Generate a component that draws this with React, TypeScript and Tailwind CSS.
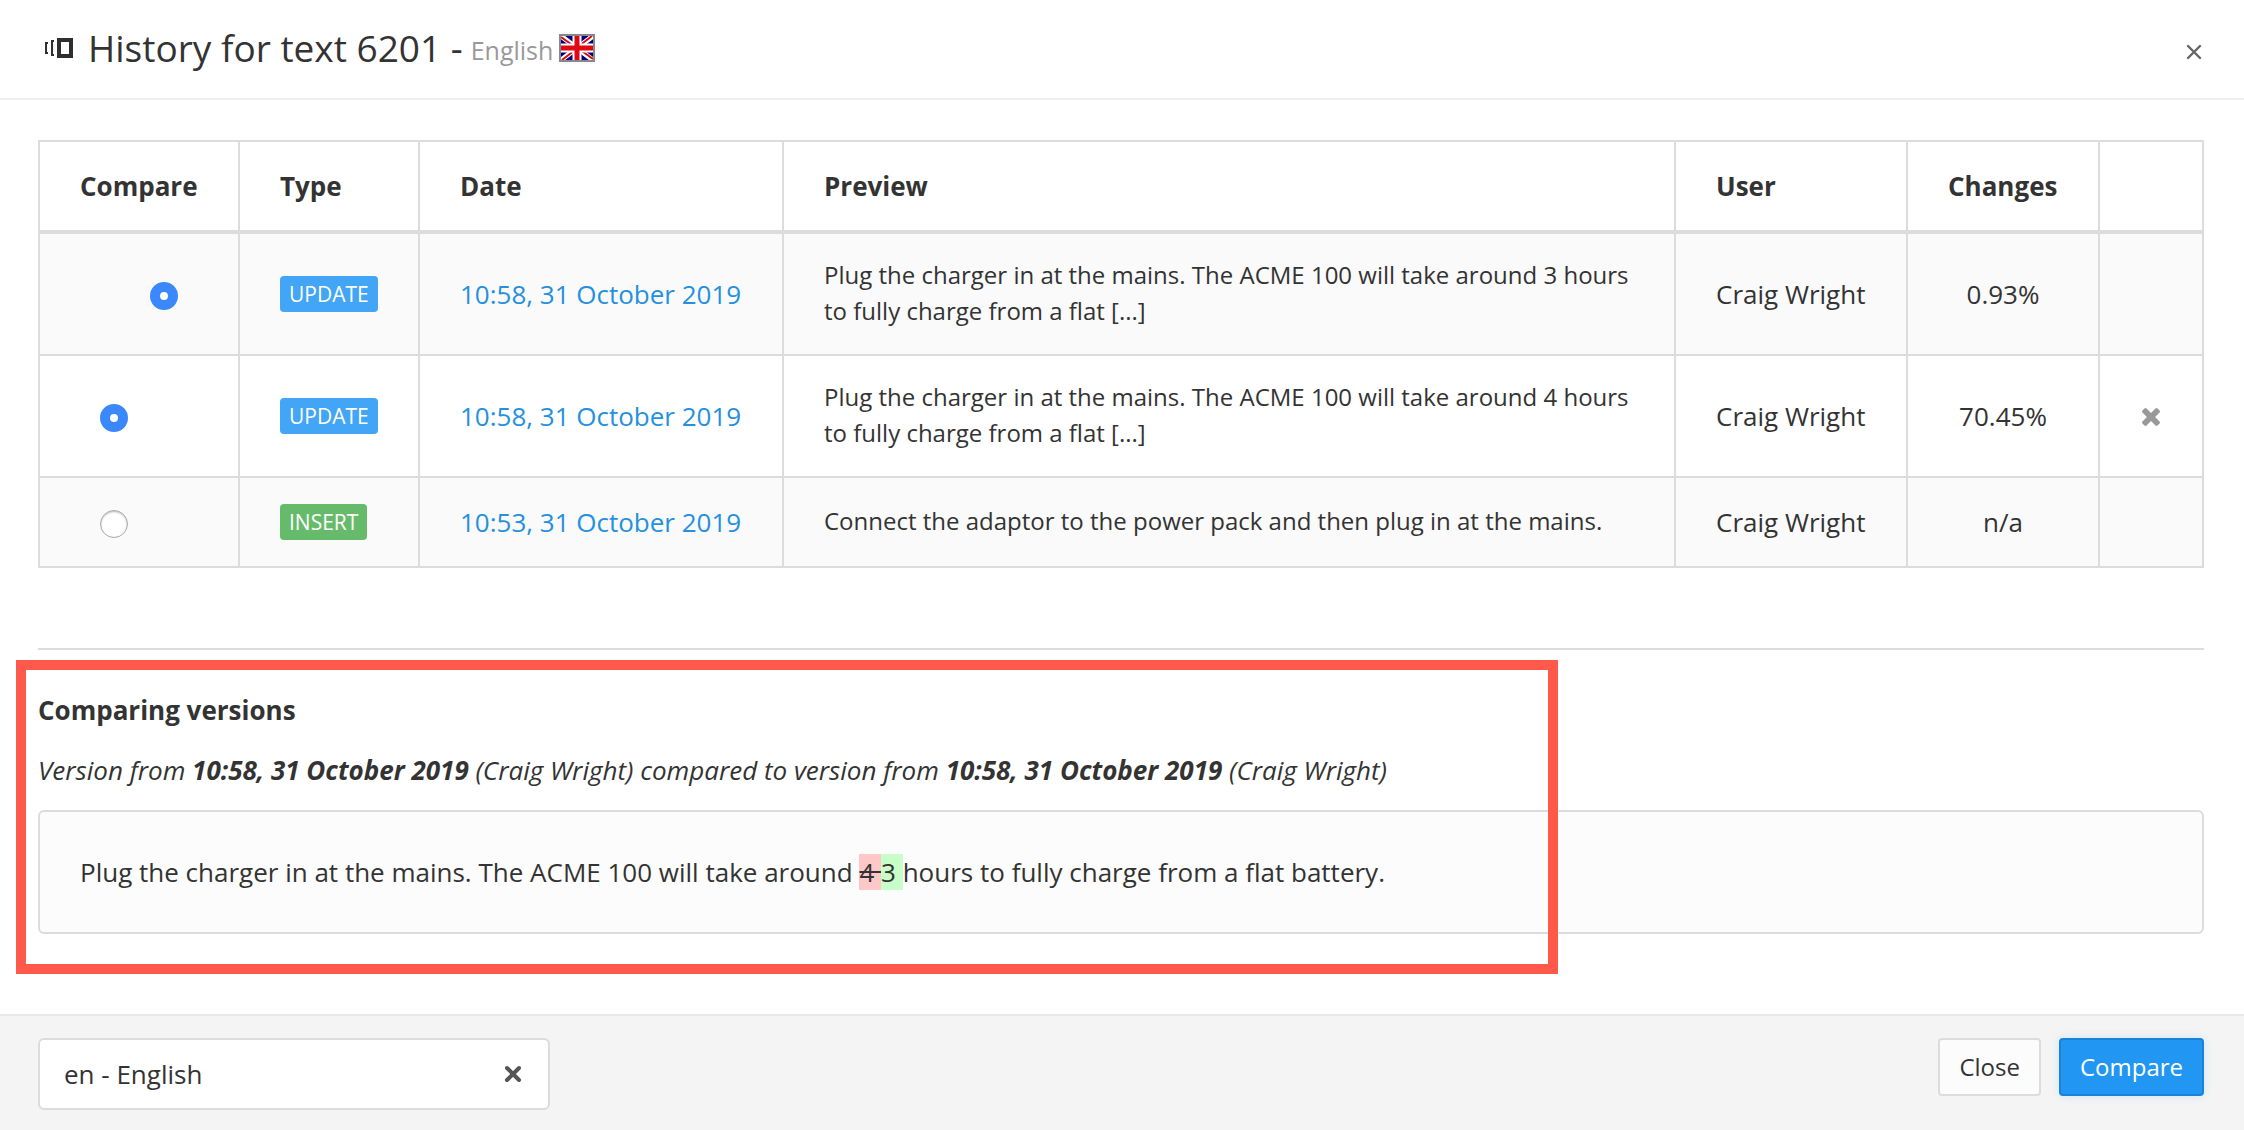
import { useState } from "react";

const rows = [
  { id: 3, side: "right", type: "UPDATE", date: "10:58, 31 October 2019", preview: "Plug the charger in at the mains. The ACME 100 will take around 3 hours to fully charge from a flat [...]", user: "Craig Wright", changes: "0.93%", removable: false },
  { id: 2, side: "left", type: "UPDATE", date: "10:58, 31 October 2019", preview: "Plug the charger in at the mains. The ACME 100 will take around 4 hours to fully charge from a flat [...]", user: "Craig Wright", changes: "70.45%", removable: true },
  { id: 1, side: "left", type: "INSERT", date: "10:53, 31 October 2019", preview: "Connect the adaptor to the power pack and then plug in at the mains.", user: "Craig Wright", changes: "n/a", removable: false },
];

const cell = "border-2 border-[#dcdcdc] px-10 py-6 text-left";

function HistoryIcon() {
  return (
    <svg width="30" height="20" viewBox="0 0 30 20" fill="none" stroke="#2f2f2f" aria-hidden="true">
      <path d="M4 5H2v10h2" strokeWidth="2" />
      <path d="M10 3H8v14h2" strokeWidth="2" />
      <path d="M15 2h12v16H15z" strokeWidth="4" />
    </svg>
  );
}

function Flag() {
  return (
    <svg width="36" height="28" viewBox="0 0 36 28" role="img" aria-label="United Kingdom">
      <path fill="#888" d="M0 0h36v28H0z" />
      <svg x="2" y="2" width="32" height="24" viewBox="0 0 32 24">
        <path fill="#00007a" d="M0 0h32v24H0z" />
        <path stroke="#fff" strokeWidth="5" d="M0 0l32 24M32 0L0 24" />
        <path stroke="#dd0a14" strokeWidth="2" d="M0 1l14 10M32 23L18 13M31 0L18 10M1 24l13-10" />
        <path stroke="#fff" strokeWidth="9" d="M16 0v24M0 12h32" />
        <path stroke="#dd0a14" strokeWidth="5" d="M16 0v24M0 12h32" />
      </svg>
    </svg>
  );
}

export default function App() {
  const [right, setRight] = useState(3);
  const [left, setLeft] = useState(2);
  const [lang, setLang] = useState("en - English");

  return (
    <div className="min-h-screen bg-white text-[26px] leading-10 text-[#333] font-['Open_Sans','Noto_Sans',sans-serif]">
      <header className="flex h-[100px] items-center justify-between border-b-2 border-[#eee] pr-10 pb-0.5 pl-11">
        <div className="flex items-center">
          <HistoryIcon />
          <h1 className="ml-3.5 flex items-end text-[37px]">
            History for text 6201 -
            <small className="ml-2 text-[25px] leading-9 text-[#999]">English</small>
          </h1>
          <span className="ml-1.5"><Flag /></span>
        </div>
        <button aria-label="Close dialog" className="mt-2 flex size-5 items-center justify-center">
          <svg width="16" height="16" viewBox="0 0 16 16" stroke="#666" strokeWidth="2.4" strokeLinecap="round">
            <path d="M2 2l12 12M14 2L2 14" />
          </svg>
        </button>
      </header>

      <main className="pt-10 pr-10 pb-20 pl-[38px]">
        <table className="w-full table-fixed border-collapse">
          <colgroup>
            <col className="w-[200px]" />
            <col className="w-[180px]" />
            <col className="w-[364px]" />
            <col />
            <col className="w-[232px]" />
            <col className="w-[192px]" />
            <col className="w-[104px]" />
          </colgroup>
          <thead>
            <tr>
              {["Compare", "Type", "Date", "Preview", "User", "Changes", ""].map((title) => (
                <th key={title} className="border-2 border-b-4 border-[#dcdcdc] px-10 py-6 text-left font-bold">{title}</th>
              ))}
            </tr>
          </thead>
          <tbody>
            {rows.map(({ id, side, type, date, preview, user, changes, removable }) => (
              <tr key={id} className="odd:bg-[#fafafa]">
                <td className={cell}>
                  <input
                    type="radio"
                    name={side}
                    aria-label={`Compare version ${id}`}
                    checked={side === "right" ? right === id : left === id}
                    onChange={() => (side === "right" ? setRight(id) : setLeft(id))}
                    className={`mt-1 block size-7 appearance-none rounded-full border border-[#aaa] bg-white shadow-[inset_0_1px_2px_#bbb] checked:border-10 checked:border-[#3b88fd] checked:shadow-none ${side === "right" ? "ml-[70px]" : "ml-5"}`}
                  />
                </td>
                <td className={cell}>
                  <span className={`block w-fit rounded-sm px-[9px] text-[21px] leading-9 text-white ${type === "INSERT" ? "bg-[#66bb6a]" : "bg-[#42a5f5]"}`}>{type}</span>
                </td>
                <td className={cell}>
                  <a href="#version" className="whitespace-nowrap text-[#2590e0]">{date}</a>
                </td>
                <td className="border-2 border-[#dcdcdc] px-10 pt-[23px] pb-[25px] text-[24px] leading-9">{preview}</td>
                <td className={`${cell} whitespace-nowrap`}>{user}</td>
                <td className="border-2 border-[#dcdcdc] py-6 text-center">{changes}</td>
                <td className="border-2 border-[#dcdcdc] pt-0.5">
                  {removable && (
                    <button aria-label="Delete version" className="mx-auto block">
                      <svg width="18" height="18" viewBox="110 366 1188 1188" fill="#999">
                        <path d="M1298 1322q0 40-28 68l-136 136q-28 28-68 28t-68-28l-294-294-294 294q-28 28-68 28t-68-28l-136-136q-28-28-28-68t28-68l294-294-294-294q-28-28-28-68t28-68l136-136q28-28 68-28t68 28l294 294 294-294q28-28 68-28t68 28l136 136q28 28 28 68t-28 68l-294 294 294 294q28 28 28 68z" />
                      </svg>
                    </button>
                  )}
                </td>
              </tr>
            ))}
          </tbody>
        </table>

        <section className="relative mt-20 border-t-2 border-[#dcdcdc] pt-10">
          <h2 className="font-bold">Comparing versions</h2>
          <p className="mt-5 italic">
            Version from <b>10:58, 31 October 2019</b> (Craig Wright) compared to version from <b>10:58, 31 October 2019</b> (Craig Wright)
          </p>
          <div id="version" className="mt-5 rounded-md border-2 border-[#dcdcdc] bg-[#fcfcfc] p-10">
            Plug the charger in at the mains. The ACME 100 will take around <del className="bg-[#ffc8c8]">4 </del><ins className="bg-[#c8ffc8] no-underline">3 </ins>hours to fully charge from a flat battery.
          </div>
          <div className="pointer-events-none absolute top-[10px] -bottom-10 -left-[22px] w-[1542px] border-10 border-[#ff594c]"></div>
        </section>
      </main>

      <footer className="flex items-start justify-between border-t-2 border-[#e8e8e8] bg-[#f4f4f4] pt-[22px] pr-10 pb-5 pl-[38px]">
        <div className="flex h-[72px] w-[512px] items-center rounded-md border-2 border-[#dcdcdc] bg-white pr-[26px] pl-6">
          <input aria-label="Language" value={lang} onChange={(e) => setLang(e.target.value)} className="min-w-0 grow outline-none" />
          <button aria-label="Clear language" onClick={() => setLang("")}>
            <svg width="18" height="18" viewBox="0 0 18 18" stroke="#555" strokeWidth="4" strokeLinecap="round">
              <path d="M3 3l12 12M15 3L3 15" />
            </svg>
          </button>
        </div>
        <div className="flex gap-[18px] text-[24px]">
          <button className="h-[58px] rounded-sm border-2 border-[#dcdcdc] bg-[#fcfcfc] px-[19px]">Close</button>
          <button className="h-[58px] rounded-sm border-2 border-[#1a82d8] bg-[#2196f3] px-[19px] text-white shadow-[0_0_10px_#cfe6f5]">Compare</button>
        </div>
      </footer>
    </div>
  );
}
